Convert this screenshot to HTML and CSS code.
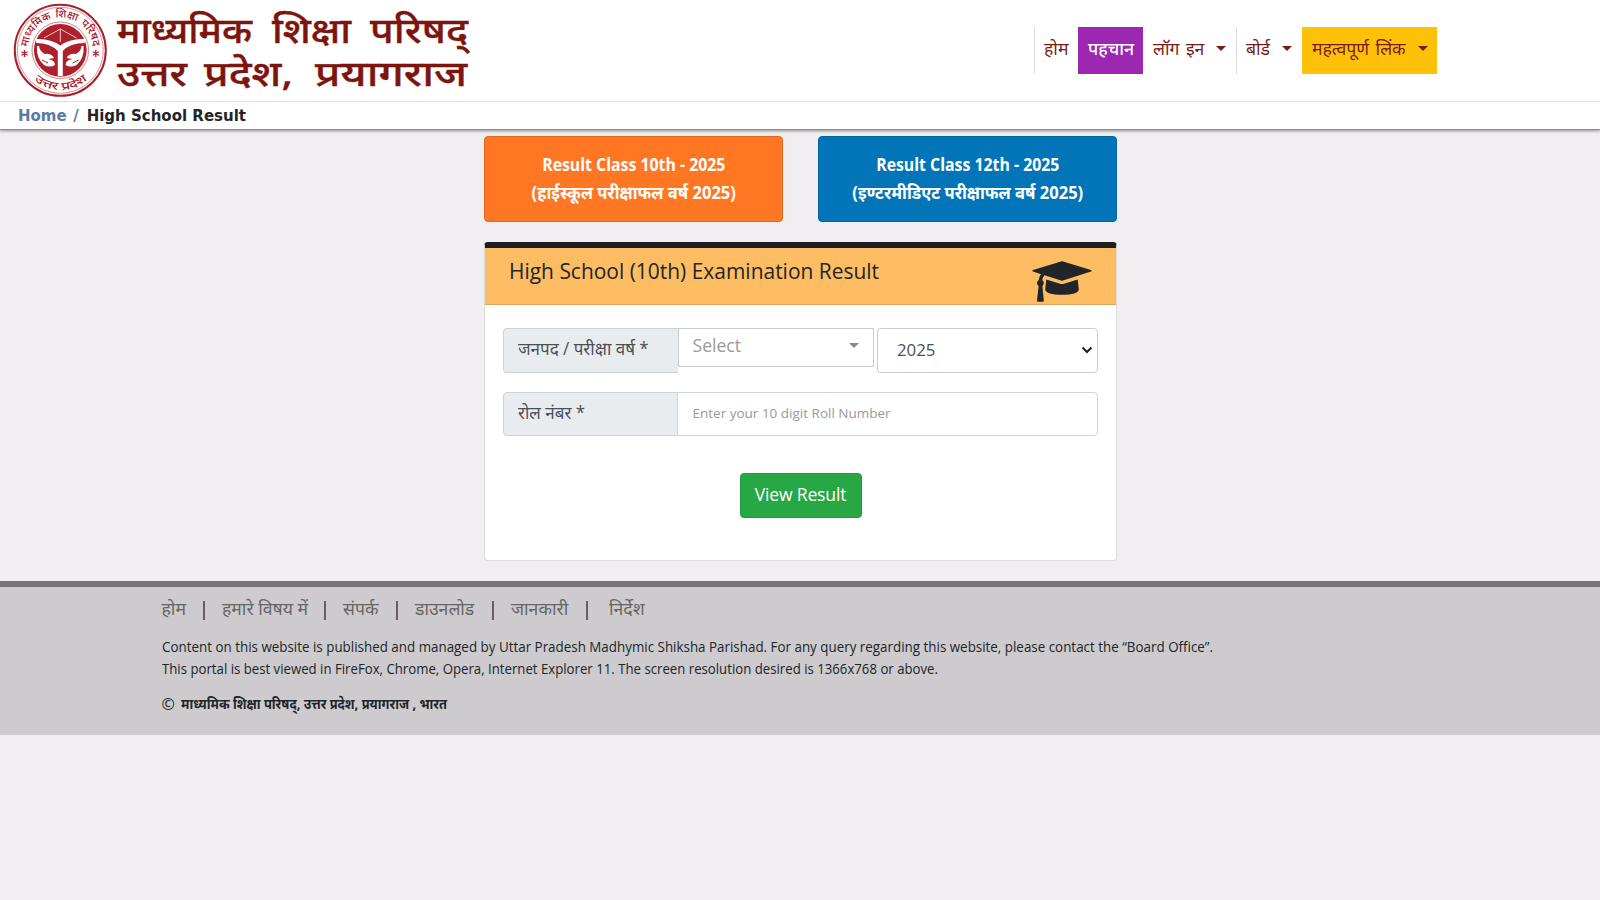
FILE: index.html
```html
<!DOCTYPE html>
<html lang="hi">
<head>
<meta charset="utf-8">
<title>High School Result</title>
<link rel="stylesheet" href="styles.css">
</head>
<body>
<header class="site-header">
  <div class="brand-row">
    <svg class="logo" width="480" height="100" viewBox="0 0 480 100">
      <defs>
        <path id="arc-top" d="M 28 50 A 32.5 32.5 0 0 1 93 50"/>
        <path id="arc-bottom" d="M 20.5 50 A 40 40 0 0 0 100.5 50"/>
      </defs>
      <circle cx="60.3" cy="50.3" r="45.5" fill="#fff" stroke="#a8202c" stroke-width="2"/>
      <circle cx="60.3" cy="50.3" r="43" fill="none" stroke="#c9656c" stroke-width=".7"/>
      <circle cx="60.3" cy="50.3" r="28.3" fill="none" stroke="#c9656c" stroke-width=".8"/>
      <circle cx="60.3" cy="50.3" r="26.4" fill="#b0202b"/>
      <text class="seal-text"><textPath href="#arc-top" startOffset="3">माध्यमिक</textPath></text>
      <text class="seal-text"><textPath href="#arc-top" startOffset="46">शिक्षा</textPath></text>
      <text class="seal-text"><textPath href="#arc-top" startOffset="72">परिषद</textPath></text>
      <text class="seal-text"><textPath href="#arc-bottom" startOffset="34" textLength="58" lengthAdjust="spacingAndGlyphs">उत्तर प्रदेश</textPath></text>
      <path d="M24.5 50v7M21.500 51.700l6 3.500M21.500 55.200l6-3.500M95.800 50v7M92.800 51.700l6 3.500M92.800 55.200l6-3.500" stroke="#a8202c" stroke-width="1.300"/>
      <path d="M35.500 39Q50 38 60.300 45.500Q70 38 85.500 39L84.500 43Q70 43 62.800 51V76H57.800V51Q50 43 36.500 43Z" fill="#fff"/>
      <path d="M44 38L60.300 29L76.500 38M60.300 29V42" fill="none" stroke="#f3d9da" stroke-width=".9"/>
      <path d="M37 46Q36 58 44 65Q50 68 55 65Q55 60 48 59L54 58Q51 53 45 54Q40 52 39 46ZM83.600 46Q84.600 58 76.600 65Q70.600 68 65.600 65Q65.600 60 72.600 59L66.600 58Q69.600 53 75.600 54Q80.600 52 81.600 46Z" fill="#fff"/>
      <path d="M42 60l6 3M78.500 60l-6 3" stroke="#b0202b" stroke-width="1"/>
      <g class="logo-text">
        <text x="117" y="43" textLength="135" lengthAdjust="spacingAndGlyphs">माध्यमिक</text>
        <text x="272" y="43" textLength="79" lengthAdjust="spacingAndGlyphs">शिक्षा</text>
        <text x="370" y="43" textLength="98" lengthAdjust="spacingAndGlyphs">परिषद्</text>
        <text x="117" y="85.500" textLength="70" lengthAdjust="spacingAndGlyphs">उत्तर</text>
        <text x="204" y="85.500" textLength="89" lengthAdjust="spacingAndGlyphs">प्रदेश,</text>
        <text x="315" y="85.500" textLength="152" lengthAdjust="spacingAndGlyphs">प्रयागराज</text>
      </g>
    </svg>
    <nav class="nav">
      <a class="nav-item nav-home">होम</a>
      <a class="nav-item nav-pehchan">पहचान</a>
      <a class="nav-item nav-login">लॉग इन<i class="caret"></i></a>
      <a class="nav-item nav-board">बोर्ड<i class="caret"></i></a>
      <a class="nav-item nav-links">महत्वपूर्ण लिंक<i class="caret"></i></a>
    </nav>
  </div>
  <div class="breadcrumb"><a>Home</a><span class="slash">/</span><span>High School Result</span></div>
</header>

<main class="content">
  <div class="result-buttons">
    <a class="result-btn orange"><span class="narrow">Result Class 10th - 2025</span><span class="medium">(हाईस्कूल परीक्षाफल वर्ष 2025)</span></a>
    <a class="result-btn blue"><span class="narrow">Result Class 12th - 2025</span><span class="medium">(इण्टरमीडिएट परीक्षाफल वर्ष 2025)</span></a>
  </div>
  <section class="card">
    <div class="card-header">
      <h1>High School (10th) Examination Result</h1>
      <svg class="cap" width="60" height="41" viewBox="0 0 60 41" fill="#212529">
        <path d="M29 .5Q30 .2 31 .5L59 9Q60.500 9.800 59 10.600L31 19.500Q30 19.800 29 19.500L12.500 14.200Q10.500 16 10.200 19Q11.800 20 11.800 22Q11.800 24 10.400 25L11.800 39.500Q11.800 40.700 10.800 40.700H6Q5 40.700 5 39.500L6.600 25Q5 24 5 22Q5 20 6.800 19Q7 15.500 9 13.200L1 10.600Q-.5 9.800 1 9Z"/>
        <path d="M14.300 18.500L28 22.800Q30 23.300 32 22.800L45.700 18.500L46.800 28.500Q46 33.800 30 33.800Q14 33.800 13.200 28.500Z"/>
      </svg>
    </div>
    <form class="form">
      <div class="field">
        <label class="field-label open"><span>जनपद / परीक्षा वर्ष *</span></label>
        <div class="district">Select<i class="caret grey"></i></div>
        <div class="year">2025<svg width="12" height="8" viewBox="0 0 12 8"><path d="M1.500 1.500L6 6L10.500 1.500" fill="none" stroke="#222" stroke-width="2"/></svg></div>
      </div>
      <div class="field">
        <label class="field-label"><span>रोल नंबर *</span></label>
        <input class="roll" placeholder="Enter your 10 digit Roll Number">
      </div>
      <button type="button" class="submit">View Result</button>
    </form>
  </section>
</main>

<footer class="footer">
  <div class="footer-links">
    <a class="f1">होम</a><i></i><a class="f2">हमारे विषय में</a><i></i><a class="f3">संपर्क</a><i></i><a class="f4">डाउनलोड</a><i></i><a class="f5">जानकारी</a><i></i><a class="f6">निर्देश</a>
  </div>
  <p class="note"><span class="published">Content on this website is published and managed by Uttar Pradesh Madhymic Shiksha Parishad. For any query regarding this website, please contact the “Board Office”.</span><span class="viewing">This portal is best viewed in FireFox, Chrome, Opera, Internet Explorer 11. The screen resolution desired is 1366x768 or above.</span></p>
  <p class="copyright"><span>©</span><b>माध्यमिक शिक्षा परिषद्, उत्तर प्रदेश, प्रयागराज , भारत</b></p>
</footer>
</body>
</html>
```
FILE: styles.css
```css
* { box-sizing: border-box; }
body {
  margin: 0;
  background: #f0eef0;
  color: #212529;
  font-family: "Open Sans", "Noto Sans", sans-serif;
  font-size: 17.6px;
  line-height: 27px;
}
i { font-style: normal; }

/* Header */
.site-header {
  height: 130px;
  background: #fff;
  border-bottom: 1px solid #8b898b;
  box-shadow: 0 1px 3px rgba(0, 0, 0, .4);
}
.brand-row {
  display: flex;
  height: 102px;
  border-bottom: 1px solid #e0e0e0;
}
.logo { flex: none; }
.logo-text { font: 500 35px "Noto Sans", sans-serif; fill: #7d150f; stroke: #7d150f; stroke-width: .4px; }
.seal-text { font: 500 11px "Noto Sans", sans-serif; fill: #a8202c; }
.nav {
  display: flex;
  height: 47px;
  margin: 27px 0 0 554px;
}
.nav-item {
  display: flex;
  align-items: center;
  padding: 0 0 5px 10px;
  color: #7a1b16;
  white-space: nowrap;
}
.nav-home { width: 44px; border-left: 1px solid #dcdcdc; padding-left: 9px; }
.nav-pehchan { width: 65px; background: #9c27b0; color: #fff; font-weight: 500; }
.nav-login { width: 93px; word-spacing: 2px; }
.nav-login .caret { margin-left: 12px; }
.nav-board { width: 66px; border-left: 1px solid #dcdcdc; padding-left: 9px; }
.nav-board .caret { margin-left: 12px; }
.nav-links { width: 135px; background: #ffc107; word-spacing: 2px; }
.nav-links .caret { margin-left: 12px; }
.caret {
  border: 5px solid transparent;
  border-top-color: currentColor;
  border-bottom: 0;
}
.breadcrumb {
  display: flex;
  gap: 6px;
  padding: 1px 0 0 18px;
  font: bold 15px/26px "DejaVu Sans", sans-serif;
}
.breadcrumb a, .slash { color: #5b7ba5; }
.slash { margin: 0 2px 0 .5px; }

/* Result choice buttons and form card */
.content {
  width: 633px;
  margin: 6px 0 0 484px;
}
.result-buttons { display: flex; justify-content: space-between; }
.result-btn {
  display: flex;
  flex-direction: column;
  align-items: center;
  width: 299px;
  height: 86px;
  padding-top: 13px;
  border: 1px solid #e4661c;
  border-radius: 4px;
  color: #fff;
  font-weight: 700;
  line-height: 28px;
}
.narrow { transform: scaleX(.9); }
.medium { transform: scaleX(.94); }
.orange { background: #ff7722; }
.blue { background: #0275b8; border-color: #02659f; }
.card {
  width: 633px;
  height: 319px;
  margin: 20px 0 0;
  border: 1px solid #dddcdd;
  border-top: 6px solid #1e1e22;
  border-radius: 4px;
  background: #fff;
}
.card-header {
  display: flex;
  justify-content: space-between;
  height: 57px;
  padding: 13px 24px 0 24px;
  background: #ffbd63;
  border-bottom: 1px solid #dda65b;
}
.card-header h1 {
  margin: -5px 0 0;
  font-size: 22.6px;
  font-weight: 400;
  line-height: 30px;
  transform: scaleX(.927);
  transform-origin: left;
}
.form { padding: 23px 18px 0 18px; }
.field { display: flex; height: 44.500px; margin-bottom: 19px; color: #495057; }
.field-label {
  width: 175px;
  padding: 6px 14px;
  border: 1px solid #cdd2d6;
  border-radius: 4px 0 0 4px;
  background: #e9ecef;
  white-space: nowrap;
}
.field-label span { display: inline-block; transform: scaleX(.965); transform-origin: left; }
.open { border-right: 0; }
.district {
  display: flex;
  justify-content: space-between;
  align-items: center;
  width: 196px;
  height: 39px;
  padding: 0 14px 4px 13.500px;
  border: 1px solid #c9cdd1;
  color: #999;
}
.grey { color: #888; border-width: 5px; border-bottom: 0; }
.year {
  display: flex;
  flex: 1;
  justify-content: space-between;
  align-items: center;
  margin-left: 3px;
  padding: 0 4px 1px 19px;
  border: 1px solid #c9cdd1;
  border-radius: 4px;
  font-size: 16.800px;
}
.roll {
  flex: 1;
  margin-left: -1px;
  padding: 0 14.500px;
  border: 1px solid #ced4da;
  border-radius: 0 4px 4px 0;
  font: inherit;
  font-size: 13.500px;
}
.roll::placeholder { color: #999; }
.submit {
  display: block;
  width: 122px;
  height: 45px;
  margin: 37px auto 0;
  padding: 0 0 3px;
  border: 1px solid #1f9a3c;
  border-radius: 4px;
  background: #28a745;
  color: #fff;
  font: inherit;
  font-weight: 500;
  letter-spacing: -.2px;
}

/* Footer */
.footer {
  height: 153.500px;
  margin-top: 20px;
  padding: 8px 0 0 161.500px;
  border-top: 6px solid #777577;
  background: #cdcbcd;
}
.footer-links { display: flex; color: #666; white-space: nowrap; }
.footer-links i { width: 2px; height: 19px; margin: 6px 2px 0; background: #6b5d60; }
.f1 { width: 39.500px; }
.f2, .f3, .f4, .f5 { padding-left: 15px; }
.f2 { width: 115px; }
.f3 { width: 66px; }
.f4 { width: 90px; }
.f5 { width: 88px; }
.f6 { padding-left: 19px; }
.note { margin: 13.500px 0 0; font-size: 14px; line-height: 22.500px; white-space: nowrap; }
.note span { display: block; transform-origin: left; }
.published { transform: scaleX(.956); }
.viewing { transform: scaleX(.943); }
.copyright {
  display: flex;
  margin: 12px 0 0;
  font-size: 14px;
  line-height: 22px;
}
.copyright span { width: 19px; font-size: 16px; }
.copyright b { transform: scaleX(.92); transform-origin: left; }
```
